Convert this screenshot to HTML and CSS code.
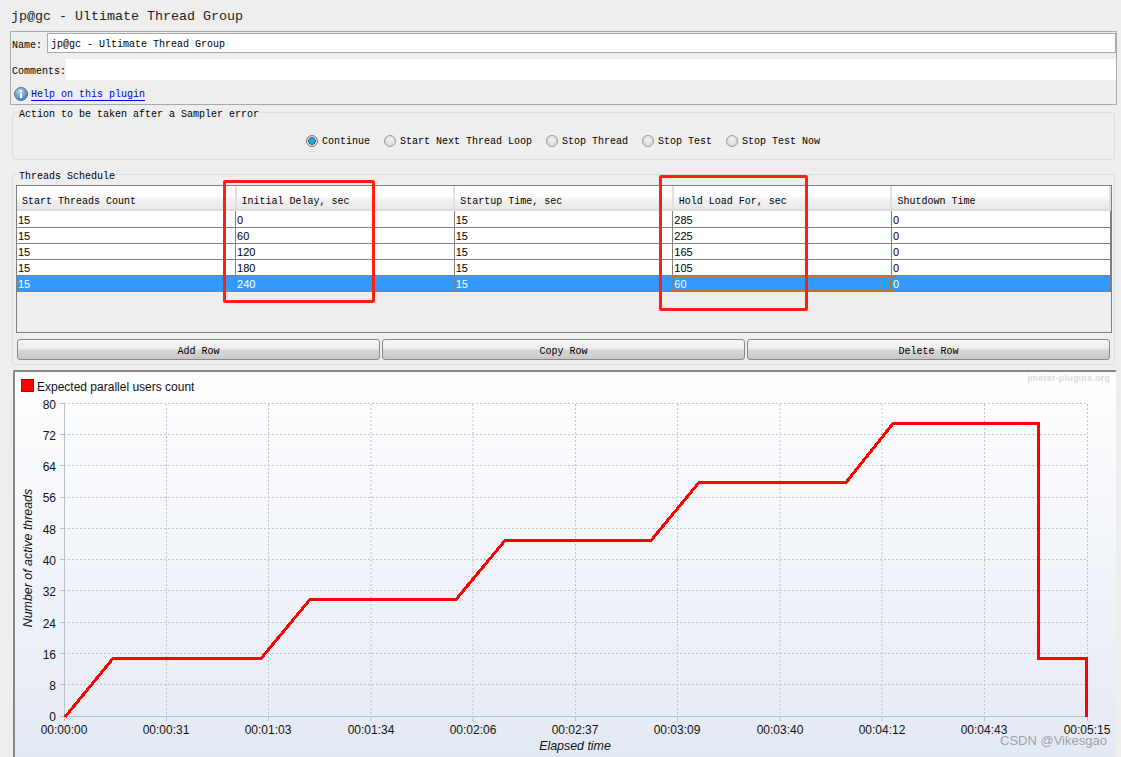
FILE: index.html
```html
<!DOCTYPE html>
<html>
<head>
<meta charset="utf-8">
<title>jp@gc - Ultimate Thread Group</title>
<link rel="stylesheet" href="styles.css">
</head>
<body>
<div class="app">
  <h1 class="title">jp@gc - Ultimate Thread Group</h1>
  <section class="name-panel">
    <div class="field-row name-row"><label>Name:</label><div class="input">jp@gc - Ultimate Thread Group</div></div>
    <div class="field-row comments-row"><label>Comments:</label><div class="input bare"></div></div>
    <div class="help-row">
      <svg class="info" viewBox="0 0 14 14" width="14" height="14">
        <defs><radialGradient id="ig" cx="40%" cy="30%" r="75%"><stop offset="0" stop-color="#b9d3ef"/><stop offset="1" stop-color="#3f78b8"/></radialGradient></defs>
        <circle cx="7" cy="7" r="6.5" fill="url(#ig)" stroke="#4d76a6"/>
        <rect x="6" y="6" width="2.2" height="5" fill="#fff"/><rect x="6" y="3" width="2.2" height="2" fill="#fff"/>
      </svg>
      <a href="#">Help on this plugin</a>
    </div>
  </section>

  <fieldset class="group error-group">
    <legend>Action to be taken after a Sampler error</legend>
    <div class="radios">
      <label class="radio"><span class="dot on"></span>Continue</label>
      <label class="radio"><span class="dot"></span>Start Next Thread Loop</label>
      <label class="radio"><span class="dot"></span>Stop Thread</label>
      <label class="radio"><span class="dot"></span>Stop Test</label>
      <label class="radio"><span class="dot"></span>Stop Test Now</label>
    </div>
  </fieldset>

  <fieldset class="group schedule-group">
    <legend>Threads Schedule</legend>
    <div class="table-box">
      <table>
        <thead>
          <tr><th>Start Threads Count</th><th>Initial Delay, sec</th><th>Startup Time, sec</th><th>Hold Load For, sec</th><th>Shutdown Time</th></tr>
        </thead>
        <tbody>
          <tr><td>15</td><td>0</td><td>15</td><td>285</td><td>0</td></tr>
          <tr><td>15</td><td>60</td><td>15</td><td>225</td><td>0</td></tr>
          <tr><td>15</td><td>120</td><td>15</td><td>165</td><td>0</td></tr>
          <tr><td>15</td><td>180</td><td>15</td><td>105</td><td>0</td></tr>
          <tr class="selected"><td>15</td><td>240</td><td>15</td><td class="focus">60</td><td>0</td></tr>
        </tbody>
      </table>
    </div>
    <div class="buttons">
      <button>Add Row</button><button>Copy Row</button><button>Delete Row</button>
    </div>
  </fieldset>

  <section class="chart">
    <svg viewBox="15 372 1101 385" width="1101" height="385">
      <defs>
        <linearGradient id="bg" x1="0" y1="0" x2="0" y2="1"><stop offset="0" stop-color="#ffffff"/><stop offset="1" stop-color="#e3e9f4"/></linearGradient>
      </defs>
      <rect x="15" y="372" width="1101" height="385" fill="url(#bg)"/>
      <rect x="21.5" y="379.5" width="12" height="12" fill="#ff0000" stroke="#c00000"/>
      <text class="legend" x="37" y="391">Expected parallel users count</text>
      <text class="brand" x="1110" y="381" text-anchor="end">jmeter-plugins.org</text>
      <g class="grid">
        <path d="M64 403.5H1087M64 434.5H1087M64 465.5H1087M64 497.5H1087M64 528.5H1087M64 559.5H1087M64 590.5H1087M64 622.5H1087M64 653.5H1087M64 684.5H1087"/>
        <path d="M166.5 404V717M268.5 404V717M371 404V717M473 404V717M575.5 404V717M677.5 404V717M780 404V717M882 404V717M984.5 404V717M1087.5 404V717"/>
      </g>
      <path class="axis" d="M64.5 403V717M60 716.5H1087M60 403.5H64M60 434.5H64M60 465.5H64M60 497.5H64M60 528.5H64M60 559.5H64M60 590.5H64M60 622.5H64M60 653.5H64M60 684.5H64M64.5 717V721M166.5 717V721M268.5 717V721M371 717V721M473 717V721M575.5 717V721M677.5 717V721M780 717V721M882 717V721M984.5 717V721M1087.5 717V721"/>
      <g class="ylabels" text-anchor="end">
        <text x="56" y="409">80</text><text x="56" y="440">72</text><text x="56" y="471">64</text><text x="56" y="502">56</text><text x="56" y="534">48</text><text x="56" y="565">40</text><text x="56" y="596">32</text><text x="56" y="628">24</text><text x="56" y="659">16</text><text x="56" y="690">8</text><text x="56" y="721">0</text>
      </g>
      <g class="xlabels" text-anchor="middle">
        <text x="64" y="734">00:00:00</text><text x="166" y="734">00:00:31</text><text x="268" y="734">00:01:03</text><text x="371" y="734">00:01:34</text><text x="473" y="734">00:02:06</text><text x="575" y="734">00:02:37</text><text x="677" y="734">00:03:09</text><text x="780" y="734">00:03:40</text><text x="882" y="734">00:04:12</text><text x="984" y="734">00:04:43</text><text x="1087" y="734">00:05:15</text>
      </g>
      <text class="axis-title" x="575" y="750" text-anchor="middle">Elapsed time</text>
      <text class="axis-title" transform="translate(32 558) rotate(-90)" text-anchor="middle">Number of active threads</text>
      <polyline class="series" points="65,717 113,658.5 261,658.5 310,599.5 456,599.5 505,540.5 651,540.5 699,482.5 846,482.5 893,423.5 1038.5,423.5 1038.5,658.5 1086.5,658.5 1086.5,717"/>
      <text class="watermark" x="1000" y="745">CSDN @Vikesgao</text>
    </svg>
  </section>

  <div class="mark mark-left"></div>
  <div class="mark mark-right"></div>
</div>
</body>
</html>
```
FILE: styles.css
```css
* { box-sizing: border-box; }
html, body { margin: 0; padding: 0; }
body { background: #eeeeee; color: #000; font-family: "Liberation Mono", monospace; font-size: 10px; }
.app { position: relative; width: 1121px; height: 757px; overflow: hidden; }

.title { margin: 0; height: 31px; padding: 9px 0 0 11px; font-size: 13.33px; line-height: 16px; font-weight: normal; color: #222; }

.name-panel { margin-left: 10px; width: 1107px; height: 74px; border: 1px solid #aaaaaa; padding: 1px 0 0 0; }
.field-row { display: flex; align-items: center; }
.field-row label { padding: 4px 0 0 1px; white-space: nowrap; }
.name-row { height: 20px; gap: 5px; }
.comments-row { height: 21px; margin-top: 6px; gap: 0; }
.input { flex: 1; height: 20px; line-height: 22px; padding-left: 3px; background: #fff; border: 1px solid #aaaaaa; font-size: 10px; }
.input.bare { height: 21px; border: 0; }
.help-row { display: flex; align-items: center; gap: 3px; height: 16px; margin-top: 6px; padding-left: 3px; }
.help-row a { color: #0000ee; font-size: 10px; text-decoration: none; border-bottom: 1px solid #0000ee; line-height: 15px; height: 14px; }
.info { flex: none; }

.group { margin: 0 0 0 12px; width: 1103px; border: 1px solid #d8e0e6; border-radius: 3px; padding: 0; min-width: 0; }
.group legend { padding: 5px 0 0; margin-left: 6px; line-height: 8px; font-size: 10px; }
.error-group { height: 54px; margin-top: 1px; }
.radios { display: flex; align-items: center; padding: 1px 0 0 293px; height: 43px; }
.radio { display: flex; align-items: center; gap: 4px; margin-right: 14px; white-space: nowrap; }
.dot { width: 12px; height: 12px; border-radius: 50%; border: 1px solid #9a9a9a; background: radial-gradient(circle at 50% 40%, #f4f4f4, #d0d0d0); }
.dot.on { background: radial-gradient(circle at 50% 50%, #2f9fd8 0 2.5px, #0d5c8c 3.5px, #e4e4e4 4px); border-color: #777; }

.schedule-group { height: 197px; margin-top: 8px; padding: 0 3px; }
.schedule-group legend { margin-left: 3px; }
.table-box { height: 148px; width: 1096px; margin-top: 4px; border: 1px solid #808080; }
table { border-collapse: collapse; table-layout: fixed; width: 1094px; }
th { height: 24px; padding: 8px 0 0 5px; text-align: left; font-weight: normal; font-size: 10px; background: linear-gradient(#ffffff 40%, #f2f2f2 60%, #e8e8e8); border-right: 2px solid #e0e0e0; border-bottom: 2px solid #dcdcdc; }
td { height: 16px; padding: 2px 0 0 1px; background: #fff; font-family: "Liberation Sans", sans-serif; font-size: 11px; line-height: 12px; border-bottom: 1px solid #808080; border-right: 1px solid #808080; }
tbody tr:first-child td { height: 17px; padding-top: 3px; }
.selected td { background: #3399ff; color: #fff; }
.selected td.focus { position: relative; }
.selected td.focus::after { content: ""; position: absolute; inset: 0; border: 1px dotted #c8741a; }

.buttons { display: flex; gap: 2px; margin: 6px 0 0 1px; width: 1093px; }
.buttons button { flex: 1; height: 21px; padding: 4px 0 0; font-family: "Liberation Mono", monospace; font-size: 10px; color: #000; border: 1px solid #8a8a8a; border-radius: 3px; background: linear-gradient(#f6f6f6, #ececec 45%, #d6d6d6 55%, #c8c8c8); }

.chart { margin: 5px 0 0 13px; width: 1103px; height: 387px; border-top: 2px solid #888888; border-left: 2px solid #888888; }
.chart svg { display: block; }
.chart text { font-family: "Liberation Sans", sans-serif; font-size: 12px; fill: #111; }
.chart .brand { font-size: 9px; font-weight: bold; fill: #d8dce0; letter-spacing: 0.2px; }
.grid path { fill: none; stroke: #c2c4cc; stroke-width: 1; stroke-dasharray: 2 2; }
.axis { fill: none; stroke: #b8c0cc; stroke-width: 1; }
.chart .axis-title { font-style: italic; font-size: 12.4px; }
.series { fill: none; stroke: #ff0000; stroke-width: 3; stroke-linejoin: miter; shape-rendering: crispEdges; }
.chart .watermark { font-size: 13px; fill: #8c8c8c; fill-opacity: 0.8; }

.mark { position: absolute; border: 3px solid #fb2012; border-radius: 2px; }
.mark-left { left: 223px; top: 180px; width: 152px; height: 123px; }
.mark-right { left: 659px; top: 175px; width: 149px; height: 136px; }
```
